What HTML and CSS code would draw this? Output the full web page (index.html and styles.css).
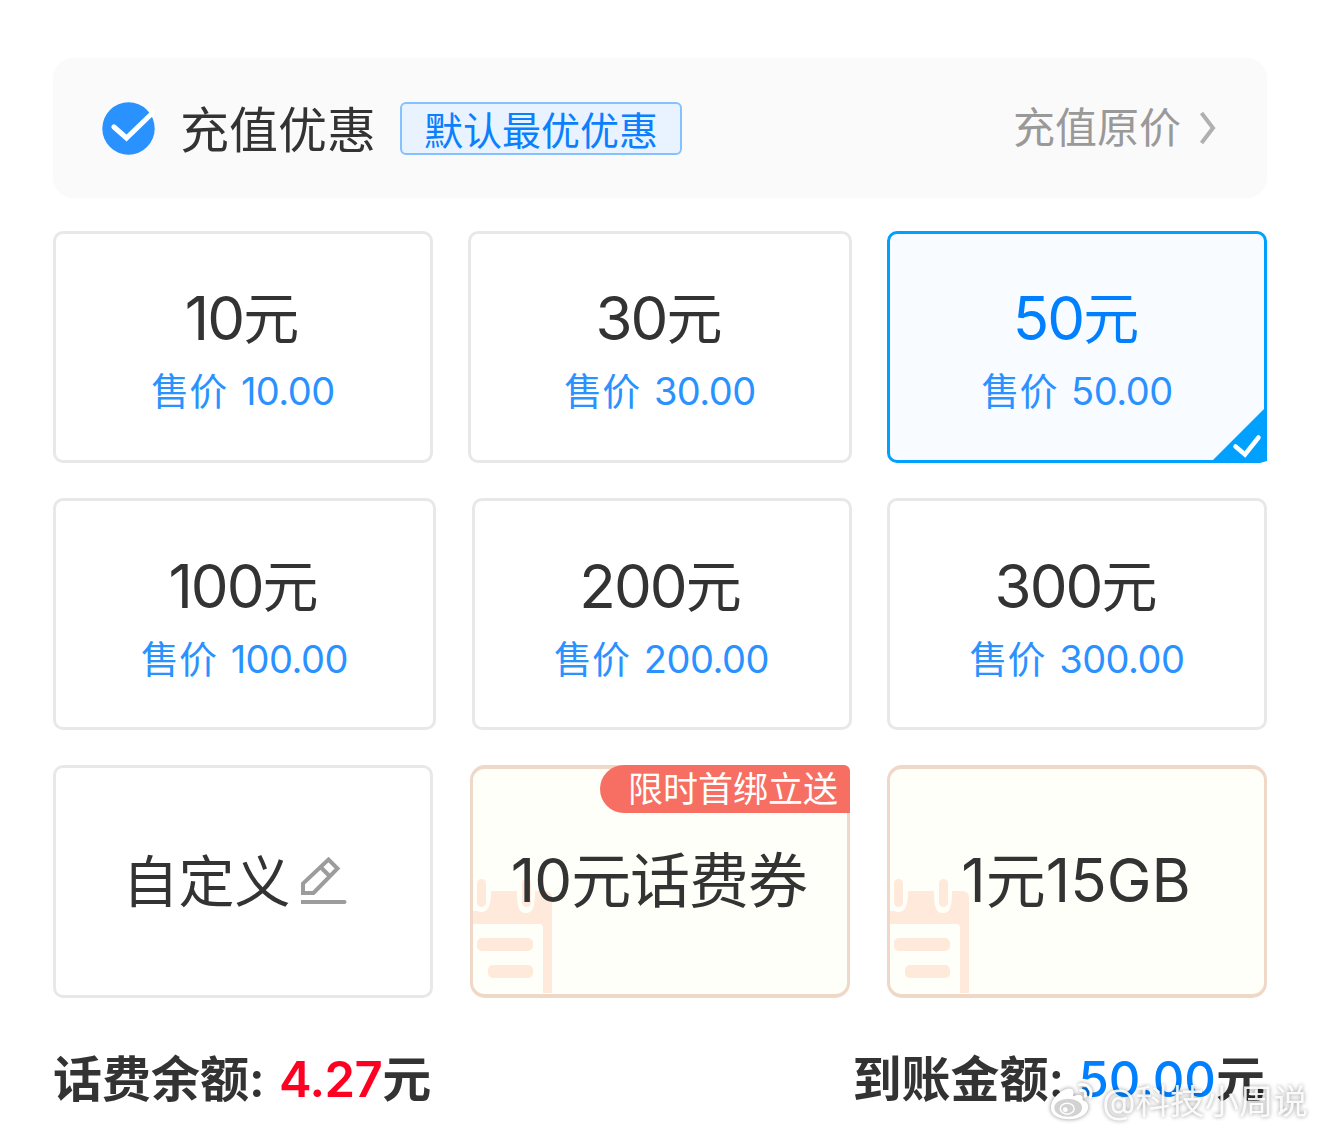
FILE: index.html
```html
<!DOCTYPE html>
<html lang="zh-CN">
<head>
  <meta charset="UTF-8">
  <title>话费充值</title>
  <link rel="stylesheet" href="styles.css">
</head>
<body>

<div class="discount-bar">
  <svg class="check-icon" width="54" height="54" viewBox="0 0 54 54">
    <circle cx="27.500" cy="27.500" r="26.200" fill="#2a92ff"/>
    <path d="M13 26 L25.500 37 L52 11.500" fill="none" stroke="#fff" stroke-width="5" stroke-linecap="round" stroke-linejoin="miter"/>
  </svg>
  <span class="discount-title">充值优惠</span>
  <span class="discount-tag">默认最优优惠</span>
  <span class="discount-value">充值原价</span>
  <svg class="arrow-icon" width="18" height="34" viewBox="0 0 18 34">
    <path d="M2.500 2 L14 17 L2.500 32" fill="none" stroke="#b0b0b0" stroke-width="4"/>
  </svg>
</div>

<div class="row">
  <div class="card">
    <div class="amount">10<span class="unit">元</span></div>
    <div class="price">售价 <span class="num">10.00</span></div>
  </div>
  <div class="card card-mid">
    <div class="amount">30<span class="unit">元</span></div>
    <div class="price">售价 <span class="num">30.00</span></div>
  </div>
  <div class="card active">
    <div class="amount">50<span class="unit">元</span></div>
    <div class="price">售价 <span class="num">50.00</span></div>
    <svg class="corner" width="57" height="57" viewBox="0 0 57 57">
      <path d="M57 0 V55 L50 57 H0 Z" fill="#00a0ff"/>
      <path d="M25.500 40.500 L35 48.500 L48.500 31.500" fill="none" stroke="#fff" stroke-width="4.500" stroke-linecap="round"/>
    </svg>
  </div>
</div>

<div class="row row-2">
  <div class="card card-first">
    <div class="amount">100<span class="unit">元</span></div>
    <div class="price">售价 <span class="num">100.00</span></div>
  </div>
  <div class="card">
    <div class="amount">200<span class="unit">元</span></div>
    <div class="price">售价 <span class="num">200.00</span></div>
  </div>
  <div class="card">
    <div class="amount">300<span class="unit">元</span></div>
    <div class="price">售价 <span class="num">300.00</span></div>
  </div>
</div>

<div class="row row-3">
  <div class="card custom">
    <span class="custom-text">自定义</span>
    <svg class="edit-icon" width="47" height="50" viewBox="0 0 47 50">
      <g fill="none" stroke="#9c9c9c" stroke-width="4">
        <path d="M2 36 V26.500 L27.500 2.500 L36.500 11.500 L12.500 36 Z"/>
        <path d="M19.500 10 L28.500 19"/>
        <path d="M0 45 H43.500" stroke-linecap="round"/>
      </g>
    </svg>
  </div>
  <div class="card gift">
    <svg class="calendar" width="80" height="114" viewBox="0 0 80 114">
      <path d="M0 32 H4 C13 35 18 31 18 12 H44 C44 28 46 34 53 34 C60 34 62 28 62 12 H72 Q79 12 79 19 V114 H70 V49 Q70 45 66 45 H0 Z" fill="#ffe9da"/>
      <rect x="4" y="0" width="9" height="28" rx="4.500" fill="#ffe9da"/>
      <rect x="49" y="0" width="9" height="28" rx="4.500" fill="#ffe9da"/>
      <rect x="4" y="59" width="56" height="13" rx="5" fill="#ffe9da"/>
      <rect x="15" y="86" width="45" height="13" rx="5" fill="#ffe9da"/>
    </svg>
    <span class="gift-text">10<span class="cjk">元话费券</span></span>
    <span class="badge">限时首绑立送</span>
  </div>
  <div class="card gift">
    <svg class="calendar" width="80" height="114" viewBox="0 0 80 114">
      <path d="M0 32 H4 C13 35 18 31 18 12 H44 C44 28 46 34 53 34 C60 34 62 28 62 12 H72 Q79 12 79 19 V114 H70 V49 Q70 45 66 45 H0 Z" fill="#ffe9da"/>
      <rect x="4" y="0" width="9" height="28" rx="4.500" fill="#ffe9da"/>
      <rect x="49" y="0" width="9" height="28" rx="4.500" fill="#ffe9da"/>
      <rect x="4" y="59" width="56" height="13" rx="5" fill="#ffe9da"/>
      <rect x="15" y="86" width="45" height="13" rx="5" fill="#ffe9da"/>
    </svg>
    <span class="gift-text data">1<span class="cjk">元</span>15GB</span>
  </div>
</div>

<div class="summary">
  <div class="balance">话费余额: <span class="red">4.27</span>元</div>
  <div class="balance received">到账金额: <span class="blue">50.00</span>元</div>
</div>

<div class="watermark">
  <svg width="44" height="42" viewBox="0 0 46 42">
    <path d="M20 7 C13 7 1 17 1 27 C1 35 9 39 20 39 C32 39 40 33 40 26 C40 22 37 20 34 19 C35 15 33 12 24 15 C26 10 24 7 20 7 Z" fill="#fff"/>
    <ellipse cx="19" cy="27" rx="14.500" ry="9.500" fill="#d2d2d2"/>
    <ellipse cx="18" cy="28" rx="8" ry="6.500" fill="#fff"/>
    <ellipse cx="18" cy="28" rx="6.500" ry="5" fill="#d2d2d2"/>
    <circle cx="16" cy="29" r="2.500" fill="#fff"/>
    <path d="M31 3 C39 1 45 8 42 16 M32 9 C36 8 38 11 37 15" fill="none" stroke="#fff" stroke-width="3" stroke-linecap="round"/>
  </svg>
  <span>@科技小周说</span>
</div>

</body>
</html>
```

FILE: styles.css
```css
body {
  margin: 0;
  padding: 58px 53px 0;
  height: 1133px;
  box-sizing: border-box;
  overflow: hidden;
  position: relative;
  background-color: #fff;
  color: #333;
  font-family: Inter, 'Noto Sans CJK SC', sans-serif;
}
.discount-bar {
  display: flex;
  align-items: center;
  height: 140px;
  padding: 0 50px 0 48px;
  box-sizing: border-box;
  background-color: #fafafa;
  border-radius: 20px;
  margin-bottom: 33px;
}
.discount-title {
  font-size: 49px;
  line-height: 60px;
  margin-left: 25px;
  padding-top: 6px;
}
.discount-tag {
  width: 282px;
  height: 53px;
  margin-left: 24px;
  box-sizing: border-box;
  border: 2px solid #85c1ff;
  border-radius: 6px;
  background-color: #e9f2ff;
  color: #0a80ff;
  font-size: 39px;
  line-height: 53px;
  text-align: center;
}
.discount-value {
  margin-left: auto;
  font-size: 42px;
  line-height: 60px;
  color: #999;
}
.arrow-icon {
  margin-left: 18px;
}
.row {
  display: flex;
  justify-content: space-between;
  margin-bottom: 35px;
}
.card {
  position: relative;
  width: 380px;
  height: 232px;
  box-sizing: border-box;
  border: 3px solid #e8e8e8;
  border-radius: 10px;
  text-align: center;
}
.card-mid {
  width: 384px;
}
.card-first {
  width: 383px;
}
.amount {
  margin-top: 48px;
  height: 72px;
  font-size: 60px;
  line-height: 72px;
  letter-spacing: -2px;
  padding-right: 2px;
}
.unit {
  font-size: 56px;
  letter-spacing: 0;
  vertical-align: 1px;
}
.price {
  margin-top: 12px;
  height: 50px;
  font-size: 38px;
  line-height: 50px;
  color: #2a92ff;
}
.num {
  margin-left: 3px;
  letter-spacing: -0.5px;
}
.row-2 .amount {
  margin-top: 49px;
}
.active {
  border-color: #00a0ff;
  background-color: #f8fbff;
}
.active .amount {
  color: #0080ff;
}
.corner {
  position: absolute;
  right: -3px;
  bottom: -3px;
}
.custom, .gift {
  display: flex;
  align-items: center;
  justify-content: center;
}
.row-3 .card {
  height: 233px;
}
.custom {
  padding-right: 16px;
}
.custom-text {
  font-size: 56px;
  padding-bottom: 9px;
}
.edit-icon {
  margin-left: 10px;
}
.gift {
  border: 4px solid #efd8c8;
  border-left-width: 3px;
  border-right-width: 3px;
  border-radius: 15px;
  background-color: #fffffa;
}
.calendar {
  position: absolute;
  left: 0;
  bottom: 1px;
}
.gift-text {
  position: relative;
  font-size: 60px;
  letter-spacing: -1px;
  padding-right: 2px;
  padding-bottom: 10px;
}
.cjk {
  vertical-align: -1px;
}
.data {
  letter-spacing: 0;
}
.badge {
  position: absolute;
  top: -4px;
  right: -3px;
  width: 250px;
  height: 48px;
  box-sizing: border-box;
  padding-left: 28px;
  border-radius: 24px 6px 0 24px;
  background-color: #f66f62;
  color: #fff;
  font-size: 35px;
  line-height: 49px;
  text-align: left;
  white-space: nowrap;
}
.summary {
  display: flex;
  justify-content: space-between;
  margin-top: 47px;
}
.balance {
  font-size: 49px;
  line-height: 70px;
  font-weight: 600;
}
.received {
  margin-right: 2px;
}
.red {
  color: #ff0022;
  margin-left: 2px;
  letter-spacing: -0.5px;
}
.blue {
  color: #0080ff;
  font-weight: 500;
  margin-left: 2px;
}
/* 水印 */
.watermark {
  position: absolute;
  right: 12px;
  bottom: 6px;
  display: flex;
  align-items: center;
  gap: 8px;
  color: rgba(255, 255, 255, 0.9);
  font-size: 34.5px;
  line-height: 50px;
  filter: drop-shadow(0 0 2px rgba(0, 0, 0, 0.45));
}
```
